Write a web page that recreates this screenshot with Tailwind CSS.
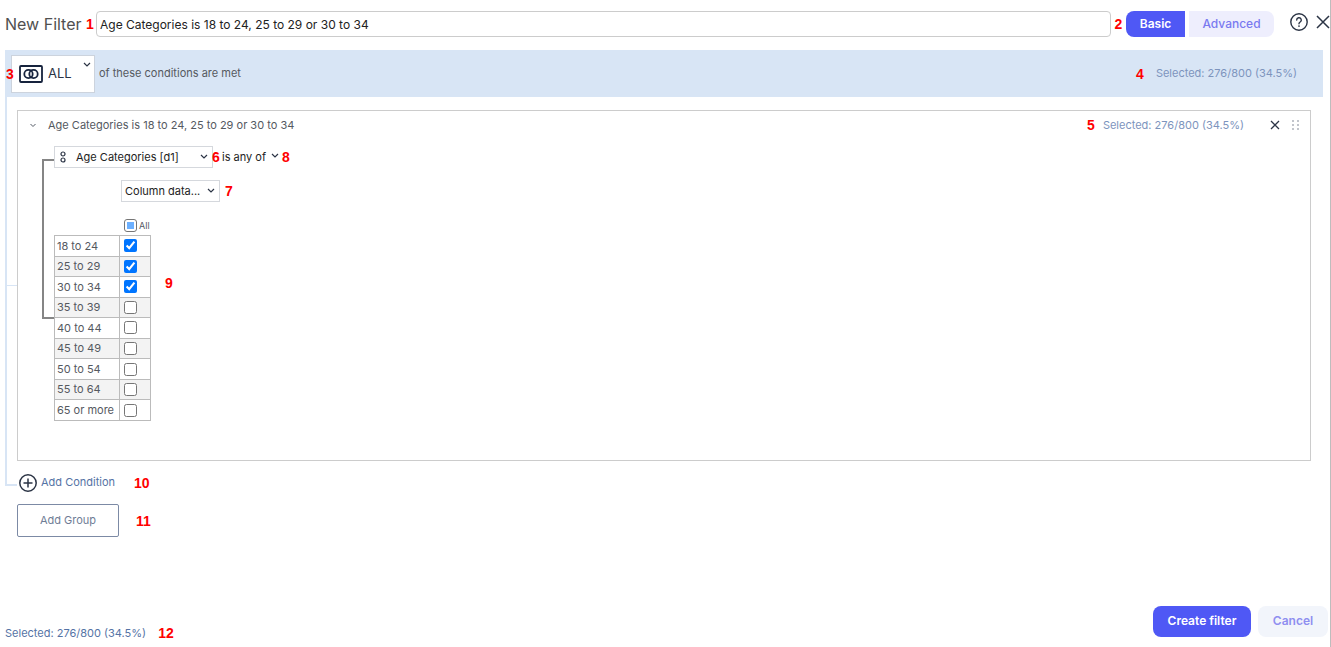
<!DOCTYPE html>
<html lang="en">
<head>
    <meta charset="UTF-8">
    <meta name="viewport" content="width=device-width, initial-scale=1.0">
    <title>New Filter</title>
    <script src="https://cdn.jsdelivr.net/npm/@tailwindcss/browser@4"></script>
</head>
<body class="bg-white font-['Inter','Liberation_Sans',sans-serif] text-[11px] text-[#55595f]">
    <main class="min-h-screen flex flex-col border-r border-[#bdbdbd]">
        <header class="flex items-center h-12 mb-[2px] pl-[5px]">
            <label for="filter_name" class="w-[79px] text-base whitespace-nowrap text-[#505050]">New Filter</label>
            <b class="w-3 text-sm text-center text-[#ff0000] font-['Liberation_Sans',sans-serif]">1</b>
            <input type="text" id="filter_name" value="Age Categories is 18 to 24, 25 to 29 or 30 to 34" class="flex-1 min-w-0 h-[26px] px-[3px] border border-[#ccc] rounded text-xs text-[#222]">
            <b class="w-[15px] text-sm text-center text-[#ff0000] font-['Liberation_Sans',sans-serif]">2</b>
            <div class="flex gap-1">
                <button class="w-[59px] h-[26px] rounded-l-lg bg-[#4f58f5] text-white text-xs font-semibold">Basic</button>
                <button class="w-[85px] h-[26px] rounded-r-lg bg-[#eeeefd] text-[#7a7af0] text-xs font-medium">Advanced</button>
            </div>
            <button class="ml-4 mb-1" aria-label="Help">
                <svg class="size-[18px]" viewBox="0 0 18 18" fill="none" stroke="#2b3445" stroke-width="1.4" stroke-linecap="round">
                    <circle cx="9" cy="9" r="8.2" />
                    <path d="M6.7 7.1a2.3 2.3 0 1 1 3.5 1.9c-.8.5-1.2.9-1.2 1.8" />
                    <path d="M9 13v.1" stroke-width="1.7" />
                </svg>
            </button>
            <button class="ml-2 mb-1" aria-label="Close">
                <svg class="size-[14px]" viewBox="0 0 14 14" stroke="#2b3445" stroke-width="1.5"><path d="M1 1l12 12M13 1L1 13" /></svg>
            </button>
        </header>

        <section class="relative ml-[5px] mr-[7px]">
            <div class="flex items-center h-[47px] bg-[#d8e5f5] pr-[26px]">
                <b class="w-[6px] text-sm text-[#ff0000] font-['Liberation_Sans',sans-serif] z-10 pl-px">3</b>
                <div class="relative">
                    <select aria-label="Match type" class="block appearance-none w-[84px] h-[38px] pl-9 border border-[#ccd3dd] bg-white text-[13px] text-[#2b3445]">
                        <option>ALL</option>
                        <option>ANY</option>
                    </select>
                    <svg class="absolute left-2 top-[10px] w-6 h-[18px] pointer-events-none" viewBox="0 0 24 18" fill="none" stroke="#16233d" stroke-width="1.8">
                        <rect x="1" y="1" width="22" height="16" rx="1" />
                        <circle cx="9.5" cy="9" r="4.2" />
                        <circle cx="14.5" cy="9" r="4.2" />
                    </svg>
                    <svg class="absolute right-1 top-[7px] w-2 h-[6px] pointer-events-none" viewBox="0 0 8 6" fill="none" stroke="#2b3445" stroke-width="1.2"><path d="M1 1l3 3 3-3" /></svg>
                </div>
                <span class="ml-1">of these conditions are met</span>
                <b class="ml-auto mr-3 text-sm text-[#ff0000] font-['Liberation_Sans',sans-serif]">4</b>
                <span class="text-[#7d94bd]">Selected: 276/800 (34.5%)</span>
            </div>

            <!-- tree lines joining the conditions -->
            <div class="absolute left-0 top-[47px] bottom-[51px] w-3 border-l-2 border-b-2 border-[#d8e5f5]"></div>
            <div class="absolute left-0 top-[235px] w-3 border-t border-[#d8e5f5]"></div>

            <div class="pl-3 pt-[13px]">
                <article class="mr-3 h-[351px] border border-[#ccc]">
                    <div class="flex items-center h-7 pl-3 pr-[10px]">
                        <button aria-label="Collapse"><svg class="w-[6px] h-[5px]" viewBox="0 0 6 5" fill="none" stroke="#555b66"><path d="M.5 1L3 3.5 5.5 1" /></svg></button>
                        <span class="ml-3">Age Categories is 18 to 24, 25 to 29 or 30 to 34</span>
                        <b class="ml-auto mr-2 text-sm text-[#ff0000] font-['Liberation_Sans',sans-serif]">5</b>
                        <span class="text-[#7d94bd]">Selected: 276/800 (34.5%)</span>
                        <button class="ml-[26px]" aria-label="Remove condition">
                            <svg class="size-[10px]" viewBox="0 0 10 10" stroke="#2b3445" stroke-width="1.3"><path d="M1 1l8 8M9 1L1 9" /></svg>
                        </button>
                        <svg class="ml-3 w-2 h-[10px]" viewBox="0 0 8 10" fill="#c2c5cc">
                            <path d="M0 0h2v2H0zM5 0h2v2H5zM0 4h2v2H0zM5 4h2v2H5zM0 8h2v2H0zM5 8h2v2H5z" />
                        </svg>
                    </div>

                    <div class="relative mt-[7px] ml-6 pl-3">
                        <div class="absolute left-0 top-[13px] w-3 h-[160px] border-2 border-r-0 border-[#858585]"></div>
                        <div class="flex items-center">
                            <div class="relative">
                                <select aria-label="Variable" class="block appearance-none w-[159px] h-[22px] pl-[21px] border border-[#d5d8dd] bg-white text-[11px] text-[#222]">
                                    <option>Age Categories [d1]</option>
                                </select>
                                <svg class="absolute left-[6px] top-[5px] w-[6px] h-3 pointer-events-none" viewBox="0 0 6 12" fill="none" stroke="#2b3445" stroke-width="1.2"><circle cx="3" cy="3" r="2" /><circle cx="3" cy="9" r="2" /></svg>
                                <svg class="absolute right-[5px] top-2 w-2 h-[6px] pointer-events-none" viewBox="0 0 8 6" fill="none" stroke="#2b3445" stroke-width="1.2"><path d="M1 1l3 3 3-3" /></svg>
                            </div>
                            <b class="w-[9px] -ml-px mr-px text-sm text-[#ff0000] font-['Liberation_Sans',sans-serif] z-10">6</b>
                            <div class="relative">
                                <select aria-label="Operator" class="block appearance-none w-[59px] h-[22px] text-[11px] text-[#222]">
                                    <option>is any of</option>
                                </select>
                                <svg class="absolute right-[2px] top-[7px] w-2 h-[6px] pointer-events-none" viewBox="0 0 8 6" fill="none" stroke="#2b3445" stroke-width="1.2"><path d="M1 1l3 3 3-3" /></svg>
                            </div>
                            <b class="ml-px text-sm text-[#ff0000] font-['Liberation_Sans',sans-serif]">8</b>
                        </div>
                        <div class="flex items-center mt-3 ml-[67px]">
                            <div class="relative">
                                <select aria-label="Column data" class="block appearance-none w-[99px] h-[22px] pl-[3px] border border-[#d5d8dd] bg-white text-[11px] text-[#222]">
                                    <option>Column data...</option>
                                </select>
                                <svg class="absolute right-[5px] top-2 w-2 h-[6px] pointer-events-none" viewBox="0 0 8 6" fill="none" stroke="#2b3445" stroke-width="1.2"><path d="M1 1l3 3 3-3" /></svg>
                            </div>
                            <b class="ml-[5px] text-sm text-[#ff0000] font-['Liberation_Sans',sans-serif]">7</b>
                        </div>
                        <label class="flex items-center gap-[2px] mt-4 ml-[70px] h-[15px] text-[9px]">
                            <input type="checkbox" id="all_checkboxes" class="appearance-none size-[13px] p-[2px] border border-[#767676] rounded-[3px] bg-[#6cb0ff] bg-clip-content">All
                        </label>
                        <div class="flex items-center mt-[2px]">
                            <table class="w-[97px] h-[186px] table-fixed border-collapse [&_td]:border [&_td]:border-[#bbb] [&_td]:p-0 [&_td:first-child]:pl-[2px] [&_td:first-child]:whitespace-nowrap [&_input]:block [&_input]:size-[13px] [&_input]:ml-1 [&_tr:nth-child(even)]:bg-[#f3f3f3]">
                                <colgroup><col class="w-[65px]"><col></colgroup>
                                <tbody>
                                    <tr><td><label for="age_1">18 to 24</label></td><td><input type="checkbox" id="age_1" checked></td></tr>
                                    <tr><td><label for="age_2">25 to 29</label></td><td><input type="checkbox" id="age_2" checked></td></tr>
                                    <tr><td><label for="age_3">30 to 34</label></td><td><input type="checkbox" id="age_3" checked></td></tr>
                                    <tr><td><label for="age_4">35 to 39</label></td><td><input type="checkbox" id="age_4"></td></tr>
                                    <tr><td><label for="age_5">40 to 44</label></td><td><input type="checkbox" id="age_5"></td></tr>
                                    <tr><td><label for="age_6">45 to 49</label></td><td><input type="checkbox" id="age_6"></td></tr>
                                    <tr><td><label for="age_7">50 to 54</label></td><td><input type="checkbox" id="age_7"></td></tr>
                                    <tr><td><label for="age_8">55 to 64</label></td><td><input type="checkbox" id="age_8"></td></tr>
                                    <tr><td><label for="age_9">65 or more</label></td><td><input type="checkbox" id="age_9"></td></tr>
                                </tbody>
                            </table>
                            <b class="ml-[14px] mb-[90px] text-sm text-[#ff0000] font-['Liberation_Sans',sans-serif]">9</b>
                        </div>
                    </div>
                </article>

                <div class="flex items-center h-[43px]">
                    <button class="flex items-center gap-1 ml-[2px] w-[115px] whitespace-nowrap text-[#5573a5]">
                        <svg class="size-[18px] shrink-0" viewBox="0 0 18 18" fill="none" stroke="#2b3445" stroke-width="1.5"><circle cx="9" cy="9" r="8.2" /><path d="M9 4.5v9M4.5 9h9" /></svg>
                        Add Condition
                    </button>
                    <b class="text-sm text-[#ff0000] font-['Liberation_Sans',sans-serif]">10</b>
                </div>
                <div class="flex items-center">
                    <button class="w-[102px] h-[33px] border border-[#7c8aa5] rounded-xs text-[#6f7d96]">Add Group</button>
                    <b class="ml-[17px] text-sm text-[#ff0000] font-['Liberation_Sans',sans-serif]">11</b>
                </div>
            </div>
        </section>

        <footer class="mt-auto flex items-center pl-[5px] pr-[2px] pb-1">
            <span class="mt-5 text-[#5573a5]">Selected: 276/800 (34.5%)</span>
            <b class="mt-5 ml-3 text-sm text-[#ff0000] font-['Liberation_Sans',sans-serif]">12</b>
            <button class="ml-auto mb-1 w-[98px] h-[31px] rounded-lg bg-[#4f58f5] text-white text-xs font-semibold">Create filter</button>
            <button class="ml-[7px] mb-1 w-[70px] h-[31px] rounded-lg bg-[#f2f5fb] text-[#8f8ff0] text-xs font-semibold">Cancel</button>
        </footer>
    </main>
</body>
</html>
